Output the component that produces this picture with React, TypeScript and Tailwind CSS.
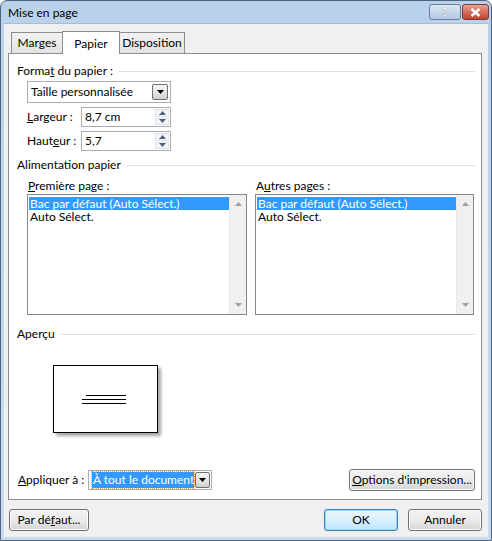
import React from 'react';

const font = { fontFamily: 'Lato, "Noto Sans", sans-serif' };

function Arrow({ dir, color = '#9aa0a8' }: { dir: 'up' | 'down'; color?: string }) {
  return (
    <svg width="7" height="4" viewBox="0 0 7 4">
      {dir === 'up' ? <polygon points="0,4 7,4 3.5,0" fill={color} /> : <polygon points="0,0 7,0 3.5,4" fill={color} />}
    </svg>
  );
}

function DropButton() {
  return (
    <div className="w-[16px] h-full flex items-center justify-center border border-[#707070] rounded-[2px] bg-gradient-to-b from-[#f4f4f4] via-[#e6e6e6] to-[#cfcfcf]">
      <svg width="7" height="4" viewBox="0 0 7 4">
        <polygon points="0,0 7,0 3.5,4" fill="#000" />
      </svg>
    </div>
  );
}

function Button({ children, className = '', primary = false }: { children: React.ReactNode; className?: string; primary?: boolean }) {
  return (
    <div
      className={`h-[22px] flex items-center justify-center whitespace-nowrap rounded-[3px] border text-[12px] text-black ${
        primary
          ? 'border-[#3c7fb1] bg-gradient-to-b from-[#eaf6fd] via-[#d9f0fc] to-[#bee6fd] shadow-[inset_0_0_0_1px_#9fd6f5]'
          : 'border-[#707070] bg-gradient-to-b from-[#f2f2f2] via-[#ebebeb] to-[#d4d4d4] shadow-[inset_0_0_0_1px_#fcfcfc]'
      } ${className}`}
    >
      {children}
    </div>
  );
}

function GroupTitle({ children }: { children: React.ReactNode }) {
  return (
    <div className="flex items-center gap-[6px] h-[14px]">
      <span className="whitespace-nowrap">{children}</span>
      <div className="flex-1 h-px bg-[#dcdfe3]" />
    </div>
  );
}

function ListBox({ w }: { w: string }) {
  return (
    <div className={`${w} h-[121px] border border-[#828790] bg-white flex`}>
      <div className="flex-1 pt-[2px] pl-[1px] whitespace-nowrap">
        <div className="h-[13px] bg-[#3399ff] text-white flex items-center pl-[1px]">
          <span className="leading-[12px]">Bac par défaut (Auto Sélect.)</span>
        </div>
        <div className="h-[14px] flex items-center pl-[1px]">
          <span className="leading-[12px]">Auto Sélect.</span>
        </div>
      </div>
      <div className="w-[17px] bg-[#f0f0f0] flex flex-col items-center justify-between py-[7px] border-l border-[#e8e8e8]">
        <Arrow dir="up" color="#a0a0a0" />
        <Arrow dir="down" color="#a0a0a0" />
      </div>
    </div>
  );
}

function SpinInput({ value }: { value: string }) {
  return (
    <div className="w-[90px] h-[20px] border border-[#abadb3] bg-white flex items-center">
      <span className="flex-1 pl-[3px]">{value}</span>
      <div className="w-[14px] h-[16px] mr-[1px] flex flex-col gap-px">
        <div className="flex-1 flex items-center justify-center border border-[#dde3ea] bg-[#f3f5f8]">
          <Arrow dir="up" color="#4d6185" />
        </div>
        <div className="flex-1 flex items-center justify-center border border-[#dde3ea] bg-[#f3f5f8]">
          <Arrow dir="down" color="#4d6185" />
        </div>
      </div>
    </div>
  );
}

export default function App() {
  return (
    <div className="w-[492px] h-[541px] text-[12px] text-black whitespace-nowrap" style={font}>
      <div className="w-full h-full flex flex-col border border-[#4e6480] rounded-t-[7px] bg-gradient-to-b from-[#b9d1ea] to-[#c9dcf0] overflow-hidden">
        {/* Title bar */}
        <div className="h-[22px] flex items-center pl-[7px] pr-[2px]">
          <span className="flex-1 text-[12px] text-black pt-[1px]">Mise en page</span>
          <div className="flex items-start gap-[1px] self-start pt-[3px]">
            <div className="w-[32px] h-[16px] rounded-[3px] border border-[#6b7d95] bg-gradient-to-b from-[#dfe9f5] via-[#c6d6ea] to-[#b3c8e3] flex items-center justify-center text-[12px] font-bold text-white leading-none [text-shadow:0_0_1px_#3b4e6b]">
              ?
            </div>
            <div className="w-[27px] h-[16px] rounded-[3px] border border-[#7e3a32] bg-gradient-to-b from-[#e8a493] via-[#d46f5c] to-[#c0432f] flex items-center justify-center">
              <svg width="11" height="9" viewBox="0 0 11 9">
                <path d="M1.5 1 L9.5 8 M9.5 1 L1.5 8" stroke="#fff" strokeWidth="2.4" />
              </svg>
            </div>
          </div>
        </div>

        {/* Client area */}
        <div className="flex-1 mx-[3px] mb-[3px] bg-[#f0f0f0] border-t border-[#a9bcd3] flex flex-col pl-[4px] pr-[6px]">
          {/* Tabs */}
          <div className="h-[29px] flex items-end pl-[3px] pt-[6px]">
            <div className="h-[21px] w-[52px] border border-b-0 border-[#898c95] bg-gradient-to-b from-[#f2f2f2] to-[#e3e3e3] flex items-center justify-center">Marges</div>
            <div className="h-[23px] w-[58px] -mx-px border border-b-0 border-[#898c95] bg-white flex items-start justify-center pt-[3px] relative z-10 mb-[-1px]">Papier</div>
            <div className="h-[21px] w-[66px] border border-b-0 border-[#898c95] bg-gradient-to-b from-[#f2f2f2] to-[#e3e3e3] flex items-center justify-center">Disposition</div>
          </div>

          {/* Panel */}
          <div className="w-[474px] h-[447px] border border-[#898c95] bg-white flex flex-col pl-[8px] pr-[6px] pt-[10px]">
            <GroupTitle>
              Forma<u>t</u> du papier :
            </GroupTitle>
            <div className="pl-[10px] flex flex-col">
              <div className="mt-[3px] w-[144px] h-[22px] border border-[#abadb3] bg-white flex items-center pr-[2px] py-[2px]">
                <span className="flex-1 pl-[3px]">Taille personnalisée</span>
                <DropButton />
              </div>
              <div className="mt-[4px] flex items-center">
                <span className="w-[54px]">
                  <u>L</u>argeur :
                </span>
                <SpinInput value="8,7 cm" />
              </div>
              <div className="mt-[4px] flex items-center">
                <span className="w-[54px]">
                  Haut<u>e</u>ur :
                </span>
                <SpinInput value="5,7" />
              </div>
            </div>

            <div className="mt-[7px]">
              <GroupTitle>Alimentation papier</GroupTitle>
            </div>
            <div className="pl-[10px] flex gap-[8px] mt-[5px]">
              <div className="flex flex-col">
                <span className="h-[17px] pl-[1px]">
                  <u>P</u>remière page :
                </span>
                <ListBox w="w-[220px]" />
              </div>
              <div className="flex flex-col">
                <span className="h-[17px] pl-[1px]">
                  A<u>u</u>tres pages :
                </span>
                <ListBox w="w-[219px]" />
              </div>
            </div>

            <div className="mt-[12px]">
              <GroupTitle>Aperçu</GroupTitle>
            </div>
            <div className="pl-[36px] mt-[24px]">
              <div className="w-[105px] h-[68px] border border-black bg-white shadow-[3px_3px_3px_rgba(0,0,0,0.35)] flex flex-col items-center justify-center gap-[3px] pr-[3px]">
                <div className="w-[40px] h-px bg-black ml-[4px]" />
                <div className="w-[44px] h-px bg-black" />
                <div className="w-[44px] h-px bg-black" />
              </div>
            </div>

            <div className="mt-auto mb-[8px] flex items-center">
              <span className="w-[71px] pl-[1px]">
                <u>A</u>ppliquer à :
              </span>
              <div className="w-[124px] h-[20px] border border-[#abadb3] bg-white flex items-center p-[1px]">
                <div className="flex-1 h-full flex items-center pl-[2px] pr-[1px]">
                  <span className="flex-1 h-full bg-[#3399ff] text-white leading-[15px] outline outline-1 outline-dotted outline-[#e8a53a] pl-[1px]">
                    À tout le document
                  </span>
                </div>
                <DropButton />
              </div>
              <div className="flex-1" />
              <Button className="w-[126px]">
                <span>
                  <u>O</u>ptions d'impression...
                </span>
              </Button>
            </div>
          </div>

          {/* Bottom buttons */}
          <div className="mt-[9px] flex items-center">
            <Button className="w-[80px] ml-[1px]">
              <span>
                Par dé<u>f</u>aut...
              </span>
            </Button>
            <div className="flex-1" />
            <Button primary className="w-[74px]">
              OK
            </Button>
            <Button className="w-[74px] ml-[10px]">Annuler</Button>
          </div>
        </div>
      </div>
    </div>
  );
}
